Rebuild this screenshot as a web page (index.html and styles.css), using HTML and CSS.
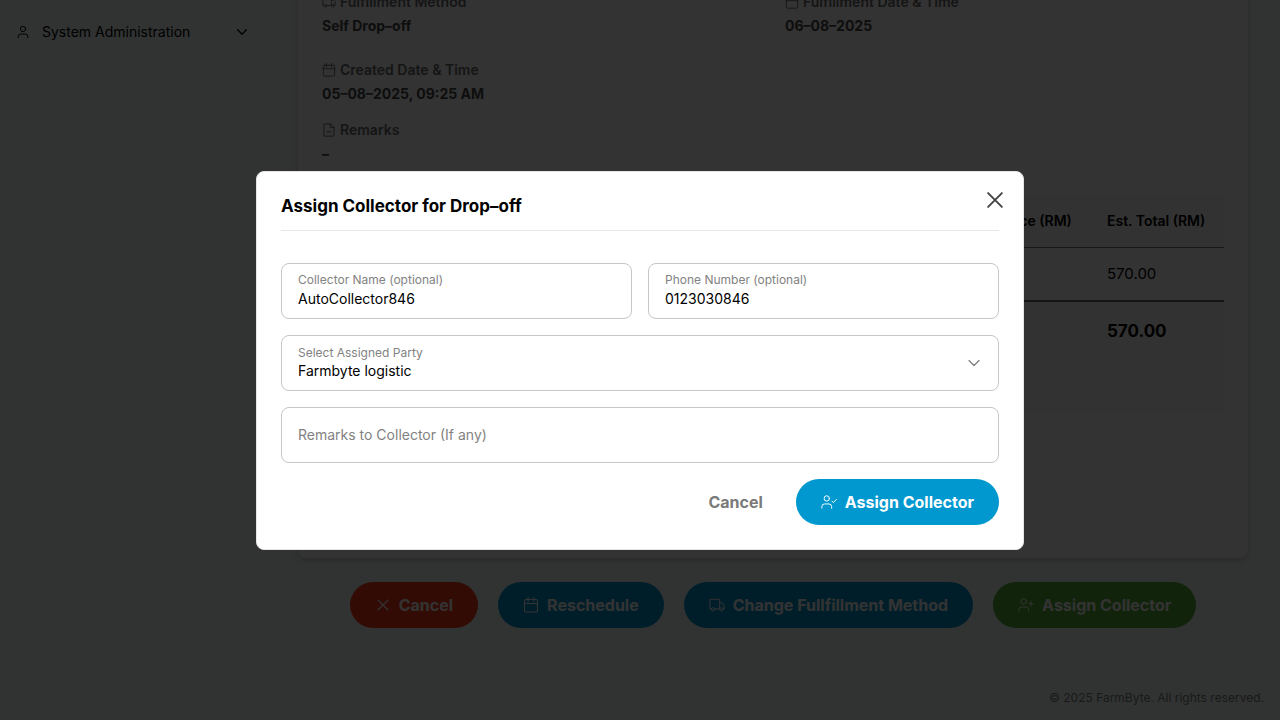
FILE: index.html
```html
<!DOCTYPE html>
<html lang="en">
<head>
<meta charset="utf-8">
<meta name="viewport" content="width=device-width, initial-scale=1">
<title>FarmByte</title>
<link rel="stylesheet" href="styles.css">
</head>
<body>
<svg class="sprite">
  <symbol id="user" viewBox="0 0 16 16"><circle cx="8" cy="4.5" r="3"/><path d="M2.5 14.5v-1.2a3 3 0 0 1 3-3h5a3 3 0 0 1 3 3v1.2"/></symbol>
  <symbol id="chevron" viewBox="0 0 16 16"><path d="M3 5.5l5 5 5-5"/></symbol>
  <symbol id="close" viewBox="0 0 16 16"><path d="M3 3l10 10M13 3L3 13"/></symbol>
  <symbol id="calendar" viewBox="0 0 16 16"><rect x="1.5" y="2.5" width="13" height="12.5" rx="1.5"/><path d="M1.5 6.5h13M5 .5v4M11 .5v4"/></symbol>
  <symbol id="file" viewBox="0 0 16 16"><path d="M9.5 1H3.5A1.3 1.3 0 0 0 2.2 2.3v11.4A1.3 1.3 0 0 0 3.5 15h9a1.3 1.3 0 0 0 1.3-1.3V5.2zM9.500 1v4.200h4.300M5.500 10h5"/></symbol>
  <symbol id="truck" viewBox="0 0 18 16"><path d="M2.300 12.500H1V1.500h11v11H6.300M12 5.500h3l2 2.500v4.500h-1.300M12 12.500h.3"/><circle cx="4.300" cy="12.800" r="1.800"/><circle cx="14" cy="12.800" r="1.800"/></symbol>
  <symbol id="user-plus" viewBox="0 0 18 16"><circle cx="6.500" cy="4" r="3"/><path d="M1 15v-1.800a3 3 0 0 1 3-3h5a3 3 0 0 1 3 3V15M14.700 4v5M12.200 6.500h5"/></symbol>
  <symbol id="user-check" viewBox="0 0 18 16"><circle cx="6.500" cy="4" r="3"/><path d="M1 15v-1.800a3 3 0 0 1 3-3h5a3 3 0 0 1 3 3V15M12.300 7l1.600 1.600 3.400-3.400"/></symbol>
</svg>

<div class="app">
  <aside class="sidebar">
    <button class="nav-item" type="button">
      <svg class="icon icon-sm"><use href="#user"/></svg>
      <span class="nav-text">System Administration</span>
      <svg class="icon icon-sm icon-bold"><use href="#chevron"/></svg>
    </button>
  </aside>
  <main class="main">
    <section class="card">
      <dl class="details">
        <div class="detail">
          <dt><svg class="icon icon-sm"><use href="#truck"/></svg>Fulfillment Method</dt>
          <dd>Self Drop–off</dd>
        </div>
        <div class="detail">
          <dt><svg class="icon icon-sm"><use href="#calendar"/></svg>Fulfillment Date &amp; Time</dt>
          <dd>06–08–2025</dd>
        </div>
        <div class="detail">
          <dt><svg class="icon icon-sm"><use href="#calendar"/></svg>Created Date &amp; Time</dt>
          <dd>05–08–2025, 09:25 AM</dd>
        </div>
      </dl>
      <dl class="remarks">
        <div class="detail">
          <dt><svg class="icon icon-sm"><use href="#file"/></svg>Remarks</dt>
          <dd>–</dd>
        </div>
      </dl>
      <table class="items">
        <thead><tr><th></th><th class="price">Unit Price (RM)</th><th class="total">Est. Total (RM)</th></tr></thead>
        <tbody><tr><td></td><td></td><td>570.00</td></tr></tbody>
        <tfoot><tr><td></td><td></td><td>570.00</td></tr></tfoot>
      </table>
    </section>
    <div class="actions">
      <button class="btn btn-red" type="button"><svg class="icon"><use href="#close"/></svg>Cancel</button>
      <button class="btn btn-blue" type="button"><svg class="icon"><use href="#calendar"/></svg>Reschedule</button>
      <button class="btn btn-blue" type="button"><svg class="icon"><use href="#truck"/></svg>Change Fullfillment Method</button>
      <button class="btn btn-green" type="button"><svg class="icon"><use href="#user-plus"/></svg>Assign Collector</button>
    </div>
    <footer class="footer">© 2025 FarmByte. All rights reserved.</footer>
  </main>
</div>

<div class="backdrop">
  <form class="modal" role="dialog" aria-modal="true" aria-labelledby="modal-title">
    <header class="modal-head">
      <h2 id="modal-title">Assign Collector for Drop–off</h2>
      <button class="close" type="button" aria-label="Close"><svg class="icon icon-close"><use href="#close"/></svg></button>
    </header>
    <div class="fields">
      <div class="field">
        <label for="name">Collector Name (optional)</label>
        <input id="name" type="text" value="AutoCollector846">
      </div>
      <div class="field">
        <label for="phone">Phone Number (optional)</label>
        <input id="phone" type="tel" value="0123030846">
      </div>
      <div class="field field-full field-select">
        <label for="party">Select Assigned Party</label>
        <select id="party"><option>Farmbyte logistic</option></select>
        <svg class="icon icon-arrow"><use href="#chevron"/></svg>
      </div>
      <div class="field field-full">
        <input id="remarks" type="text" aria-label="Remarks to Collector (If any)" placeholder="Remarks to Collector (If any)">
      </div>
    </div>
    <div class="modal-actions">
      <button class="btn btn-plain" type="button">Cancel</button>
      <button class="btn btn-blue" type="submit"><svg class="icon"><use href="#user-check"/></svg>Assign Collector</button>
    </div>
  </form>
</div>
</body>
</html>
```
FILE: styles.css
```css
* { box-sizing: border-box; }
body {
  margin: 0;
  background: #f5fff9;
  color: #000;
  font: 14px/24px Inter, "Liberation Sans", sans-serif;
}
button, input, select { font: inherit; color: inherit; }
button { cursor: pointer; }
dl, dd, h2 { margin: 0; }

.sprite { display: none; }
.icon {
  width: 16px;
  height: 16px;
  flex: none;
  fill: none;
  stroke: currentColor;
  stroke-width: 1.1;
  stroke-linecap: round;
  stroke-linejoin: round;
}
.icon-sm { width: 14px; height: 14px; }
.icon-bold { stroke-width: 1.5; }
.icon-close { width: 22px; height: 22px; stroke-width: 1.4; }

.app { display: flex; height: 100vh; overflow: hidden; }
.sidebar { flex: 0 0 298px; padding: 12px 32px 0 16px; background: #f3fbf7; }
.nav-item {
  display: flex;
  align-items: center;
  gap: 12px;
  width: 100%;
  height: 40px;
  padding: 0;
  padding-right: 17px;
  border: 0;
  background: none;
  text-align: left;
}
.nav-text { flex: 1; }

.main {
  flex: 1;
  min-width: 0;
  display: flex;
  flex-direction: column;
  justify-content: flex-end;
}
.card {
  margin-right: 32px;
  padding: 24px 24px 145px;
  border-radius: 8px;
  background: #fff;
  box-shadow: 0 2px 6px rgba(0, 0, 0, .2);
}
.details { display: grid; grid-template-columns: 1fr 1fr; row-gap: 20px; column-gap: 24px; }
.remarks { margin: 12px 0 29px; }
.detail dt { display: flex; align-items: center; gap: 4px; color: #6b6b6b; font-weight: 600; }
.detail dd { color: #484848; font-weight: 700; }

.items { width: 100%; border-collapse: collapse; text-align: left; }
.items th { height: 52px; background: #f7f7f7; border-bottom: 1px solid #757575; font-weight: 600; }
.items th, .items td { padding: 0 16px; }
.items td { height: 54px; font-size: 15px; }
.items .price { width: 137px; white-space: nowrap; }
.items .total { width: 133px; white-space: nowrap; }
.items tfoot td {
  height: 112px;
  padding-top: 17px;
  border-top: 2px solid #666;
  background: #f7f7f7;
  vertical-align: top;
  font-size: 17px;
  font-weight: 700;
}

.actions { display: flex; justify-content: center; gap: 20px; margin: 24px 32px 58px 0; }
.btn {
  display: inline-flex;
  align-items: center;
  gap: 8px;
  height: 46px;
  padding: 0 25px;
  border: 0;
  border-radius: 23px;
  color: #fff;
  font-size: 16px;
  font-weight: 700;
  white-space: nowrap;
}
.btn-red { background: #f73818; }
.btn-blue { background: #0098cf; }
.btn-green { background: #58ad38; }
.btn-plain { background: none; color: #7a7a7a; }
.footer { padding: 0 16px 10px 0; color: #7d7d7d; font-size: 12px; text-align: right; }

.backdrop {
  position: fixed;
  inset: 0;
  display: grid;
  place-items: center;
  background: rgba(0, 0, 0, .8);
}
.modal {
  width: 60%;
  min-width: 480px;
  padding: 24px;
  border: 1px solid #e5e5e5;
  border-radius: 8px;
  background: #fff;
}
.modal-head {
  display: flex;
  justify-content: space-between;
  align-items: flex-start;
  padding-bottom: 12px;
  margin-top: -2px;
  border-bottom: 1px solid #e6e6e6;
}
.modal-head h2 { font-size: 17px; line-height: 24px; font-weight: 700; }
.close { display: flex; margin: -5px -7px 0 0; padding: 0; border: 0; background: none; color: #444; }
.fields { display: grid; grid-template-columns: 1fr 1fr; gap: 16px; margin: 32px 0 16px; }
.field {
  display: flex;
  flex-direction: column;
  justify-content: center;
  height: 56px;
  padding: 0 16px;
  border: 1px solid #c6c6c6;
  border-radius: 8px;
}
.field-full { grid-column: 1 / -1; }
.field label { color: #828282; font-size: 12px; line-height: 16px; }
.field input, .field select {
  width: 100%;
  height: 22px;
  padding: 0;
  border: 0;
  outline: 0;
  background: none;
  appearance: none;
}
.field input::placeholder { color: #828282; opacity: 1; }
.field-select { display: grid; grid-template-columns: 1fr 16px; align-content: center; }
.field-select label, .field-select select { grid-column: 1; }
.field .icon-arrow { grid-column: 2; grid-row: 1 / 3; align-self: center; color: #777; }
.field-select select { height: 20px; line-height: 18px; }
.modal-actions { display: flex; justify-content: flex-end; gap: 8px; }
```
